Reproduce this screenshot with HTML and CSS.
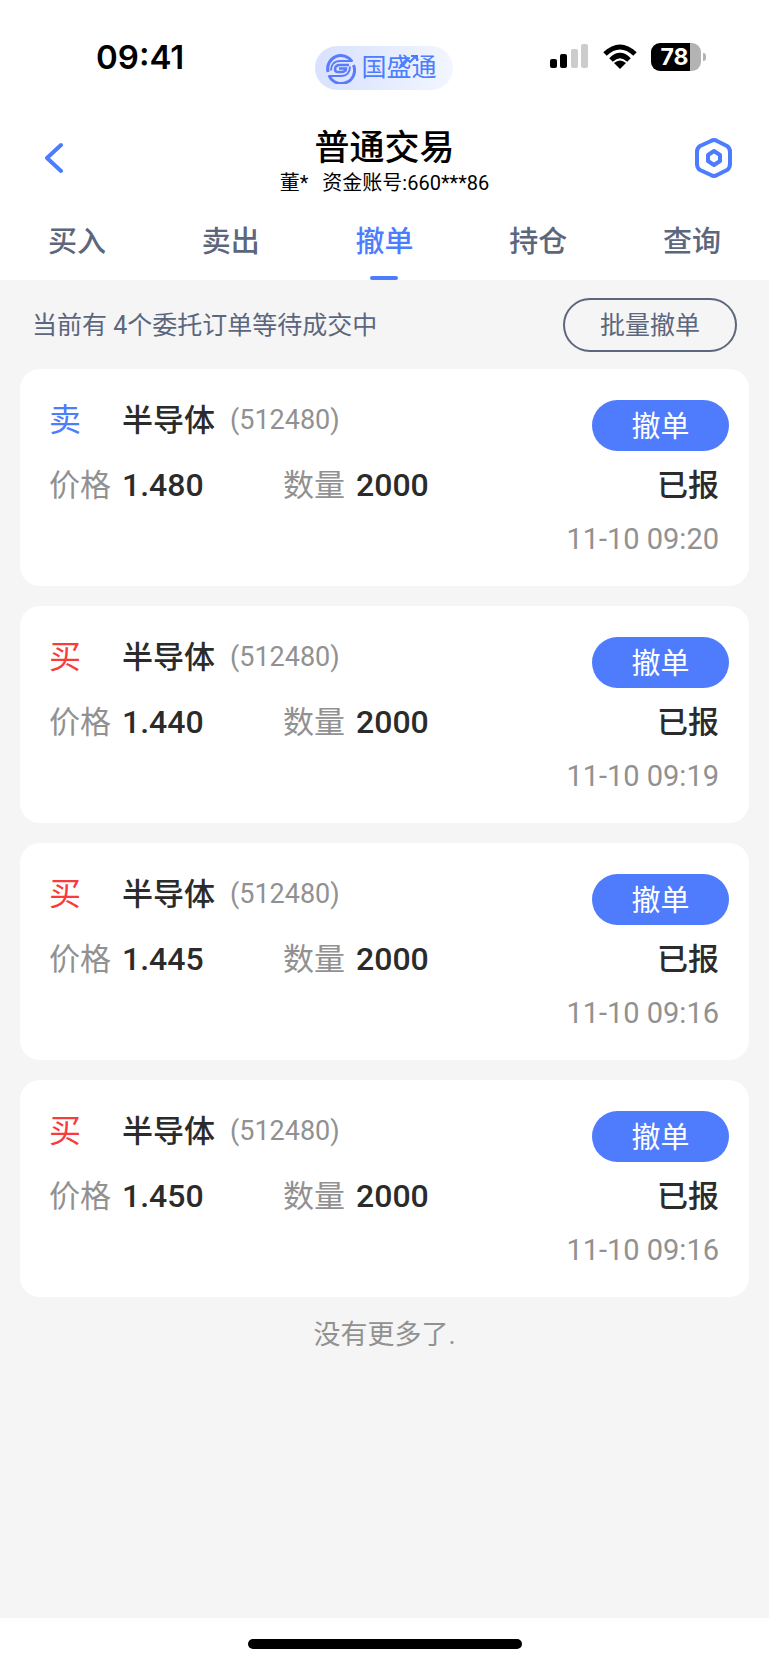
FILE: index.html
```html
<!DOCTYPE html>
<html lang="zh-CN">
<head>
    <meta charset="UTF-8">
    <meta name="viewport" content="width=device-width, initial-scale=1">
    <title>普通交易</title>
    <link rel="stylesheet" href="styles.css">
</head>
<body>
    <div class="status_bar">
        <div class="time">09:41</div>
        <div class="brand">
            <svg width="31" height="31" viewBox="0 0 31 31" fill="none" stroke="#5b7cfa" stroke-width="3">
                <path d="M3 19A13.3 13.3 0 0 1 27 8.500"/>
                <path d="M28.500 12A13.300 13.300 0 0 1 4 22.500"/>
                <path d="M27.500 8H15C9 8 6 12 6 17.500" stroke-width="2"/>
                <path d="M3.500 23H16C22 23 25 19 25 13.500" stroke-width="2"/>
                <path d="M24 12H15C11.500 12 10 14 10 16.500C10 18.500 11.500 19 13 19H16C19 19 21 17.500 21 15.500H14" stroke-width="2.500"/>
            </svg>
            <span>国盛通</span>
            <svg class="brand_arrow" width="20" height="14" viewBox="0 0 20 14" fill="none" stroke="#4c7dff" stroke-width="2">
                <path d="M1 12L8 5L11 8L17 2M12 2H18V7"/>
            </svg>
        </div>
        <div class="status_icons">
            <svg width="39" height="26" viewBox="0 0 39 26">
                <rect x="0" y="15" width="7" height="9" rx="2"/>
                <rect x="10" y="10" width="7" height="14" rx="2"/>
                <rect x="21" y="5" width="7" height="19" rx="2" fill="#ccc"/>
                <rect x="31" y="0" width="7" height="24" rx="2" fill="#ccc"/>
            </svg>
            <svg width="34" height="26" viewBox="0 0 34 26" fill="none" stroke="#000" stroke-width="5">
                <path d="M2 10Q17 -4 32 10"/>
                <path d="M8 16Q17 7 26 16"/>
                <path d="M17 25L11 19Q17 14 23 19Z" fill="#000" stroke="none"/>
            </svg>
            <div class="battery">78</div>
        </div>
    </div>
    <header>
        <button class="icon_btn" aria-label="返回">
            <svg width="20" height="32" viewBox="0 0 20 32" fill="none" stroke="#4c7dff" stroke-width="4" stroke-linecap="round" stroke-linejoin="round">
                <path d="M16 3L2 16L16 29"/>
            </svg>
        </button>
        <div class="title">
            <h1>普通交易</h1>
            <p><span>董*</span><span>资金账号:660***86</span></p>
        </div>
        <button class="icon_btn" aria-label="设置">
            <svg width="40" height="42" viewBox="0 0 40 42" fill="none" stroke="#4c7dff" stroke-width="4" stroke-linejoin="round">
                <path d="M17 4Q20 2 23 4L33 9Q36 11 36 15V27Q36 31 33 33L23 38Q20 40 17 38L6 33Q3 31 3 27V15Q3 11 6 9Z"/>
                <path d="M20 14L26 18V24L20 28L14 24V18Z"/>
            </svg>
        </button>
    </header>
    <nav>
        <a href="#">买入</a>
        <a href="#">卖出</a>
        <a href="#" class="active">撤单</a>
        <a href="#">持仓</a>
        <a href="#">查询</a>
    </nav>
    <main>
        <div class="notice">
            <p>当前有 4个委托订单等待成交中</p>
            <button class="batch_btn">批量撤单</button>
        </div>
        <div class="orders">
            <div class="order_card">
                <div class="order_info">
                    <div class="row">
                        <span class="side sell">卖</span>
                        <span class="name">半导体</span>
                        <span class="code">(512480)</span>
                    </div>
                    <div class="row">
                        <span class="label">价格</span>
                        <span class="value">1.480</span>
                        <span class="label">数量</span>
                        <span class="value">2000</span>
                    </div>
                </div>
                <div class="order_state">
                    <button class="cancel_btn">撤单</button>
                    <p class="state">已报</p>
                    <p class="date">11-10 09:20</p>
                </div>
            </div>
            <div class="order_card">
                <div class="order_info">
                    <div class="row">
                        <span class="side buy">买</span>
                        <span class="name">半导体</span>
                        <span class="code">(512480)</span>
                    </div>
                    <div class="row">
                        <span class="label">价格</span>
                        <span class="value">1.440</span>
                        <span class="label">数量</span>
                        <span class="value">2000</span>
                    </div>
                </div>
                <div class="order_state">
                    <button class="cancel_btn">撤单</button>
                    <p class="state">已报</p>
                    <p class="date">11-10 09:19</p>
                </div>
            </div>
            <div class="order_card">
                <div class="order_info">
                    <div class="row">
                        <span class="side buy">买</span>
                        <span class="name">半导体</span>
                        <span class="code">(512480)</span>
                    </div>
                    <div class="row">
                        <span class="label">价格</span>
                        <span class="value">1.445</span>
                        <span class="label">数量</span>
                        <span class="value">2000</span>
                    </div>
                </div>
                <div class="order_state">
                    <button class="cancel_btn">撤单</button>
                    <p class="state">已报</p>
                    <p class="date">11-10 09:16</p>
                </div>
            </div>
            <div class="order_card">
                <div class="order_info">
                    <div class="row">
                        <span class="side buy">买</span>
                        <span class="name">半导体</span>
                        <span class="code">(512480)</span>
                    </div>
                    <div class="row">
                        <span class="label">价格</span>
                        <span class="value">1.450</span>
                        <span class="label">数量</span>
                        <span class="value">2000</span>
                    </div>
                </div>
                <div class="order_state">
                    <button class="cancel_btn">撤单</button>
                    <p class="state">已报</p>
                    <p class="date">11-10 09:16</p>
                </div>
            </div>
        </div>
        <p class="no_more">没有更多了.</p>
    </main>
    <footer>
        <div class="home_bar"></div>
    </footer>
</body>
</html>
```
FILE: styles.css
```css
* {
    box-sizing: border-box;
    margin: 0;
    padding: 0;
}
body {
    display: flex;
    flex-direction: column;
    min-height: 100vh;
    background-color: #fff;
    color: #2b2b2b;
    font-family: Roboto, "Noto Sans CJK SC", sans-serif;
}
button {
    border: none;
    background: none;
    font-family: inherit;
    cursor: pointer;
}
svg {
    display: block;
}

/* status bar */
.status_bar {
    display: grid;
    grid-template-columns: 1fr auto 1fr;
    align-items: center;
    height: 116px;
    padding: 0 68px 0 66px;
    color: #000;
}
.time {
    padding-left: 30px;
    font-family: Inter, sans-serif;
    font-size: 33px;
    font-weight: 600;
    line-height: 40px;
}
.brand {
    position: relative;
    display: flex;
    align-items: center;
    gap: 6px;
    width: 138px;
    height: 44px;
    padding-left: 10px;
    margin-top: 20px;
    border-radius: 22px;
    background: linear-gradient(90deg, #d8e1fe, #f2f6ff);
    color: #4c7dff;
    font-size: 25px;
    line-height: 44px;
}
.brand_arrow {
    position: absolute;
    left: 84px;
    top: 8px;
}
.status_icons {
    display: flex;
    justify-content: flex-end;
    align-items: center;
    gap: 14px;
}
.battery {
    position: relative;
    width: 50px;
    height: 28px;
    padding-right: 3px;
    border-radius: 9px;
    background: linear-gradient(90deg, #000 78%, #b3b3b3 78%);
    color: #fff;
    font-family: Inter, sans-serif;
    font-size: 23px;
    font-weight: 700;
    line-height: 28px;
    text-align: center;
}
.battery::after {
    content: "";
    position: absolute;
    right: -5px;
    top: 10px;
    width: 3px;
    height: 8px;
    border-radius: 0 4px 4px 0;
    background-color: #b3b3b3;
}
.time,
.status_icons {
    margin-bottom: 2px;
}

/* page header */
header {
    display: flex;
    justify-content: space-between;
    align-items: center;
    height: 84px;
    padding: 0 35px;
    color: #000;
}
.icon_btn {
    display: flex;
    justify-content: center;
    align-items: center;
    width: 40px;
    height: 42px;
}
.title {
    padding-top: 8px;
    text-align: center;
}
.title h1 {
    font-size: 35px;
    font-weight: 500;
    line-height: 42px;
}
.title p {
    display: flex;
    gap: 14px;
    font-size: 20px;
    line-height: 26px;
}

/* tabs */
nav {
    display: flex;
    height: 80px;
}
nav a {
    position: relative;
    flex: 1;
    color: #5c667d;
    font-size: 29px;
    font-weight: 500;
    line-height: 84px;
    text-align: center;
    text-decoration: none;
}
nav a.active {
    color: #4c7dff;
}
nav a.active::after {
    content: "";
    position: absolute;
    left: 50%;
    bottom: 0;
    width: 28px;
    height: 4px;
    margin-left: -14px;
    border-radius: 2px;
    background-color: #4c7dff;
}

/* orders */
main {
    flex: 1;
    padding: 0 20px;
    background-color: #f5f5f5;
}
.notice {
    display: flex;
    justify-content: space-between;
    align-items: center;
    height: 89px;
    padding: 0 12px;
    color: #5c667d;
    font-size: 25px;
}
.notice p,
.batch_btn {
    padding-bottom: 4px;
}
.batch_btn {
    width: 174px;
    height: 54px;
    border: 2px solid #5c667d;
    border-radius: 27px;
    color: #5c667d;
    font-size: 25px;
}
.orders {
    display: flex;
    flex-direction: column;
    gap: 20px;
}
.order_card {
    display: flex;
    justify-content: space-between;
    min-height: 217px;
    padding: 31px 20px 0 29px;
    border-radius: 20px;
    background-color: #fff;
}
.row {
    display: flex;
    align-items: center;
    height: 40px;
    font-size: 31px;
}
.row + .row {
    margin-top: 25px;
}
.side,
.name,
.label {
    padding-bottom: 6px;
}
.side {
    width: 73px;
    font-size: 32px;
}
.sell {
    color: #4c7dff;
}
.buy {
    color: #f93b3b;
}
.name {
    width: 108px;
    font-weight: 500;
}
.code {
    color: #919191;
    font-size: 27px;
}
.label {
    width: 73px;
    color: #919191;
}
.value {
    width: 161px;
    font-size: 32px;
    font-weight: 500;
}
.order_state {
    display: flex;
    flex-direction: column;
    align-items: flex-end;
}
.cancel_btn {
    width: 137px;
    height: 51px;
    padding-bottom: 3px;
    border-radius: 26px;
    background-color: #4f7bfd;
    color: #fff;
    font-size: 29px;
}
.state {
    margin-top: 15px;
    padding-right: 10px;
    font-size: 31px;
    font-weight: 500;
    line-height: 40px;
}
.date {
    margin-top: 13px;
    padding-right: 10px;
    color: #919191;
    font-size: 29px;
    line-height: 40px;
}
.no_more {
    margin-top: 18px;
    color: #919191;
    font-size: 27px;
    line-height: 40px;
    text-align: center;
}

/* bottom bar */
footer {
    height: 47px;
    padding-top: 21px;
}
.home_bar {
    width: 274px;
    height: 10px;
    margin: 0 auto;
    border-radius: 5px;
    background-color: #000;
}
```
